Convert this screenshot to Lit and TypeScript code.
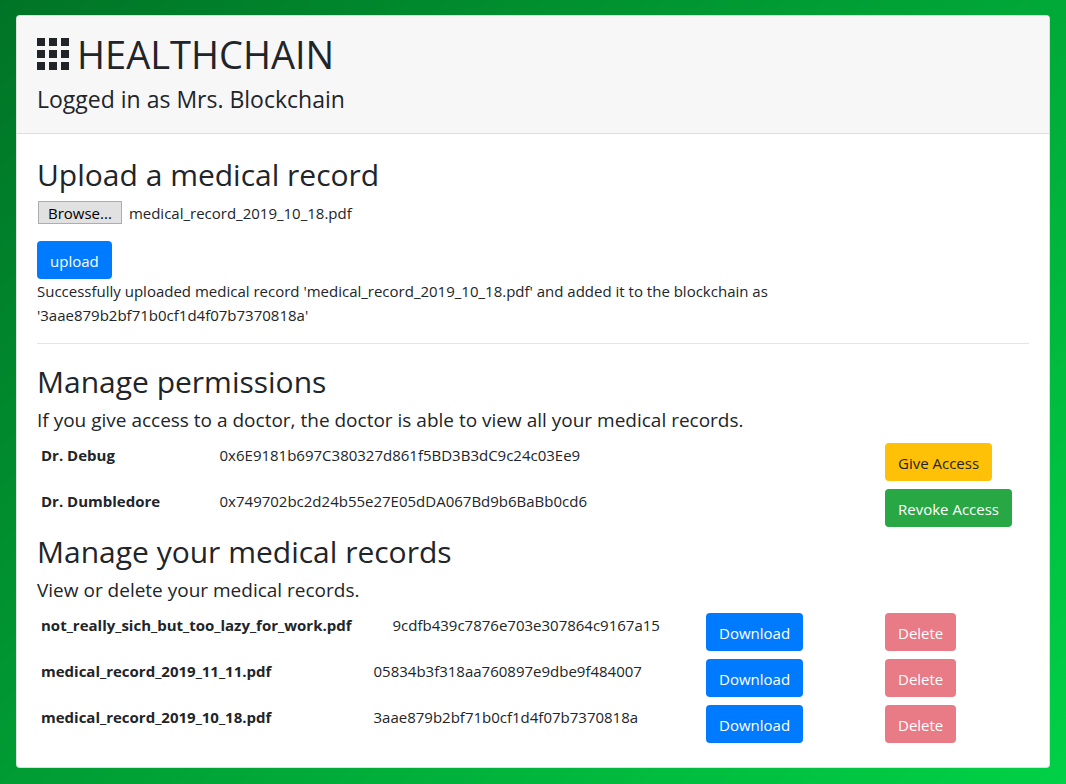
import { LitElement, html, css } from "lit";
import { customElement, state } from "lit/decorators.js";

interface Doctor {
  name: string;
  address: string;
  granted: boolean;
}

interface MedicalRecord {
  file: string;
  hash: string;
}

@customElement("app-root")
export class AppRoot extends LitElement {
  static styles = css`
    :host {
      display: block;
      box-sizing: border-box;
      min-height: 100vh;
      padding: 15px 16px 16px;
      background: linear-gradient(135deg, #007426, #00d146);
      color: #212529;
      font-family: "Segoe UI", "Open Sans", "Noto Sans", sans-serif;
      font-size: 15px;
      line-height: 24px;
    }
    * {
      box-sizing: border-box;
    }
    h1, h2, p {
      margin: 0;
      font-weight: 400;
    }
    .card {
      background: #fff;
      border: 1px solid rgba(0, 0, 0, 0.125);
      border-radius: 4px;
      background-clip: border-box;
    }
    .header {
      padding: 12px 20px;
      background: #f7f7f7;
      border-bottom: 1px solid #dfdfdf;
      border-radius: 3px 3px 0 0;
    }
    .brand {
      display: flex;
      align-items: center;
      gap: 8px;
      font-size: 38px;
      line-height: 52px;
    }
    .logo {
      width: 32px;
      height: 32px;
      fill: currentColor;
    }
    .user {
      margin: 5px 0 7px;
      font-size: 23px;
      line-height: 29px;
    }
    .body {
      padding: 20px;
    }
    .title {
      margin-bottom: 4px;
      font-size: 30px;
      line-height: 42px;
    }
    .lede {
      margin-bottom: 6px;
      font-size: 19px;
      line-height: 26px;
    }
    .picker {
      display: flex;
      align-items: flex-start;
      gap: 7px;
      margin-bottom: 16px;
      padding: 1px 1px 0;
    }
    .browse {
      height: 23px;
      padding: 0 9px;
      border: 1px solid #adadad;
      background: #e1e1e1;
      color: #000;
      font: inherit;
      line-height: 20px;
    }
    .btn {
      display: block;
      padding: 7px 12px 5px;
      border: 1px solid transparent;
      border-radius: 4px;
      color: #fff;
      font: inherit;
      line-height: 24px;
      white-space: nowrap;
      cursor: pointer;
    }
    .primary {
      background: #007bff;
    }
    .warning {
      background: #ffc107;
      color: #212529;
    }
    .success {
      background: #28a745;
    }
    .danger {
      background: #dc3545;
    }
    .btn:disabled {
      opacity: 0.65;
      cursor: default;
    }
    .rule {
      margin: 16px 0 17px;
      border: 0;
      border-top: 1px solid rgba(0, 0, 0, 0.1);
    }
    .list, .list tbody {
      display: block;
    }
    .row {
      display: grid;
    }
    .doctors .row {
      grid-template-columns: 18% 1fr 148px;
    }
    .records .row {
      grid-template-columns: minmax(max-content, 1fr) 1fr 179px 148px;
    }
    .records .name {
      padding-right: 37px;
    }
    .name, .cell {
      padding: 4px;
      text-align: left;
    }
    .name {
      font-weight: 700;
    }
  `;

  @state() private fileName = "medical_record_2019_10_18.pdf";

  @state() private doctors: Doctor[] = [
    { name: "Dr. Debug", address: "0x6E9181b697C380327d861f5BD3B3dC9c24c03Ee9", granted: false },
    { name: "Dr. Dumbledore", address: "0x749702bc2d24b55e27E05dDA067Bd9b6BaBb0cd6", granted: true },
  ];

  private records: MedicalRecord[] = [
    { file: "not_really_sich_but_too_lazy_for_work.pdf", hash: "9cdfb439c7876e703e307864c9167a15" },
    { file: "medical_record_2019_11_11.pdf", hash: "05834b3f318aa760897e9dbe9f484007" },
    { file: "medical_record_2019_10_18.pdf", hash: "3aae879b2bf71b0cf1d4f07b7370818a" },
  ];

  private browse() {
    this.renderRoot.querySelector<HTMLInputElement>("#file")?.click();
  }

  private pick(e: Event) {
    const file = (e.target as HTMLInputElement).files?.[0];
    if (file) this.fileName = file.name;
  }

  private toggle(doctor: Doctor) {
    this.doctors = this.doctors.map((d) => (d === doctor ? { ...d, granted: !d.granted } : d));
  }

  render() {
    return html`
      <main class="card">
        <header class="header">
          <h1 class="brand">
            <svg class="logo" viewBox="0 0 32 32" aria-hidden="true">
              <path d="M0 0h8v8H0zM12 0h8v8h-8zM24 0h8v8h-8zM0 12h8v8H0zM12 12h8v8h-8zM24 12h8v8h-8zM0 24h8v8H0zM12 24h8v8h-8zM24 24h8v8h-8z" />
            </svg>
            <span>HEALTHCHAIN</span>
          </h1>
          <p class="user">Logged in as Mrs. Blockchain</p>
        </header>
        <div class="body">
          <section>
            <h2 class="title">Upload a medical record</h2>
            <div class="picker">
              <input id="file" type="file" hidden aria-label="Medical record" @change=${this.pick} />
              <button class="browse" type="button" @click=${this.browse}>Browse...</button>
              <output for="file">${this.fileName}</output>
            </div>
            <button class="btn primary" type="button">upload</button>
            <p>
              Successfully uploaded medical record 'medical_record_2019_10_18.pdf' and added it to the blockchain as
              <br />'3aae879b2bf71b0cf1d4f07b7370818a'
            </p>
          </section>
          <hr class="rule" />
          <section>
            <h2 class="title">Manage permissions</h2>
            <p class="lede">If you give access to a doctor, the doctor is able to view all your medical records.</p>
            <table class="list doctors">
              <tbody>
                ${this.doctors.map(
                  (d) => html`<tr class="row">
                    <th class="name" scope="row">${d.name}</th>
                    <td class="cell">${d.address}</td>
                    <td class="cell">
                      <button class="btn ${d.granted ? "success" : "warning"}" type="button" @click=${() => this.toggle(d)}>
                        ${d.granted ? "Revoke Access" : "Give Access"}
                      </button>
                    </td>
                  </tr>`
                )}
              </tbody>
            </table>
          </section>
          <section>
            <h2 class="title">Manage your medical records</h2>
            <p class="lede">View or delete your medical records.</p>
            <table class="list records">
              <tbody>
                ${this.records.map(
                  (r) => html`<tr class="row">
                    <th class="name" scope="row">${r.file}</th>
                    <td class="cell">${r.hash}</td>
                    <td class="cell"><button class="btn primary" type="button">Download</button></td>
                    <td class="cell"><button class="btn danger" type="button" disabled>Delete</button></td>
                  </tr>`
                )}
              </tbody>
            </table>
          </section>
        </div>
      </main>
    `;
  }
}
